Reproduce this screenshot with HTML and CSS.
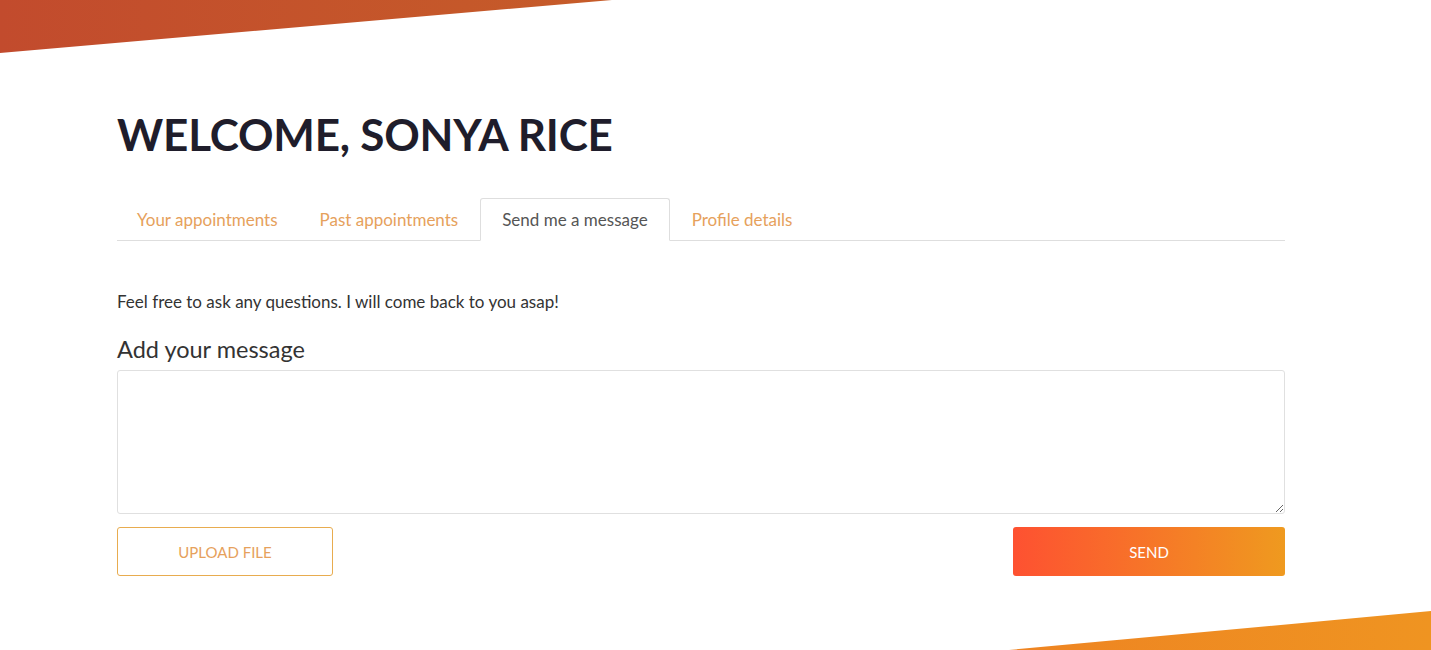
FILE: index.html
```html
<!DOCTYPE html>
<html lang="en">
<head>
    <meta charset="UTF-8">
    <meta name="viewport" content="width=device-width, initial-scale=1.0">
    <title>Welcome</title>
    <link rel="stylesheet" href="styles.css">
</head>
<body>
    <svg class="corner corner-top" width="612" height="54" viewBox="0 0 612 54">
        <defs>
            <linearGradient id="topFill" x1="0" y1="0" x2="1" y2="0">
                <stop offset="0" stop-color="#c24b2d"/>
                <stop offset="1" stop-color="#c65c29"/>
            </linearGradient>
        </defs>
        <polygon points="0,0 612,0 0,53" fill="url(#topFill)"/>
    </svg>
    <svg class="corner corner-bottom" width="422" height="39" viewBox="0 0 422 39">
        <defs>
            <linearGradient id="bottomFill" x1="0" y1="0" x2="1" y2="0">
                <stop offset="0" stop-color="#ee8422"/>
                <stop offset="1" stop-color="#ef9421"/>
            </linearGradient>
        </defs>
        <polygon points="0,39 422,0 422,39" fill="url(#bottomFill)"/>
    </svg>

    <div class="container">
        <h1>Welcome, Sonya Rice</h1>

        <ul class="tabs">
            <li class="tab">Your appointments</li>
            <li class="tab">Past appointments</li>
            <li class="tab active">Send me a message</li>
            <li class="tab">Profile details</li>
        </ul>

        <p class="intro">Feel free to ask any questions. I will come back to you asap!</p>

        <label class="field-label" for="message">Add your message</label>
        <textarea id="message" class="message"></textarea>

        <div class="actions">
            <button class="btn btn-outline">Upload file</button>
            <button class="btn btn-send">Send</button>
        </div>
    </div>
</body>
</html>
```

FILE: styles.css
```css
body {
    font-family: 'Lato', 'Open Sans', sans-serif;
    background-color: #fff;
    margin: 0;
    padding: 0;
    height: 650px;
    overflow: hidden;
    position: relative;
    color: #333;
}
.corner {
    position: absolute;
    display: block;
}
.corner-top {
    top: 0;
    left: 0;
}
.corner-bottom {
    bottom: 0;
    right: 0;
}
.container {
    padding: 104px 146px 0 117px;
}
h1 {
    margin: 0 0 34px;
    font-size: 44px;
    font-weight: 700;
    line-height: 60px;
    text-transform: uppercase;
    color: #1f1d2b;
    letter-spacing: -0.2px;
}
.tabs {
    list-style: none;
    margin: 0;
    padding: 0;
    display: flex;
    border-bottom: 1px solid #dedede;
}
.tab {
    padding: 10px 19px 10px;
    margin-right: 2px;
    margin-bottom: -1px;
    font-size: 17px;
    line-height: 21px;
    color: #e6a15c;
    border: 1px solid transparent;
    border-radius: 3px 3px 0 0;
    cursor: pointer;
}
.tab.active {
    color: #555;
    background: #fff;
    border-color: #dedede #dedede #fff;
    padding-left: 21px;
    padding-right: 21px;
}
.intro {
    margin: 51px 0 0;
    font-size: 17px;
    line-height: 20px;
    color: #333;
}
.field-label {
    display: block;
    margin-top: 24px;
    font-size: 23.5px;
    line-height: 26px;
    color: #333;
}
.message {
    display: block;
    box-sizing: border-box;
    width: 100%;
    height: 144px;
    margin-top: 8px;
    border: 1px solid #e0e0e0;
    border-radius: 3px;
    resize: vertical;
    font-family: inherit;
}
.actions {
    display: flex;
    justify-content: space-between;
    margin-top: 13px;
}
.btn {
    height: 49px;
    border-radius: 3px;
    font-family: inherit;
    font-size: 15px;
    text-transform: uppercase;
    cursor: pointer;
}
.btn-outline {
    width: 216px;
    background: #fff;
    color: #e6a15c;
    border: 1px solid #e8ac4f;
}
.btn-send {
    width: 272px;
    border: none;
    color: #fff;
    background: linear-gradient(to right, #fe5131, #ef9a1f);
}
```
